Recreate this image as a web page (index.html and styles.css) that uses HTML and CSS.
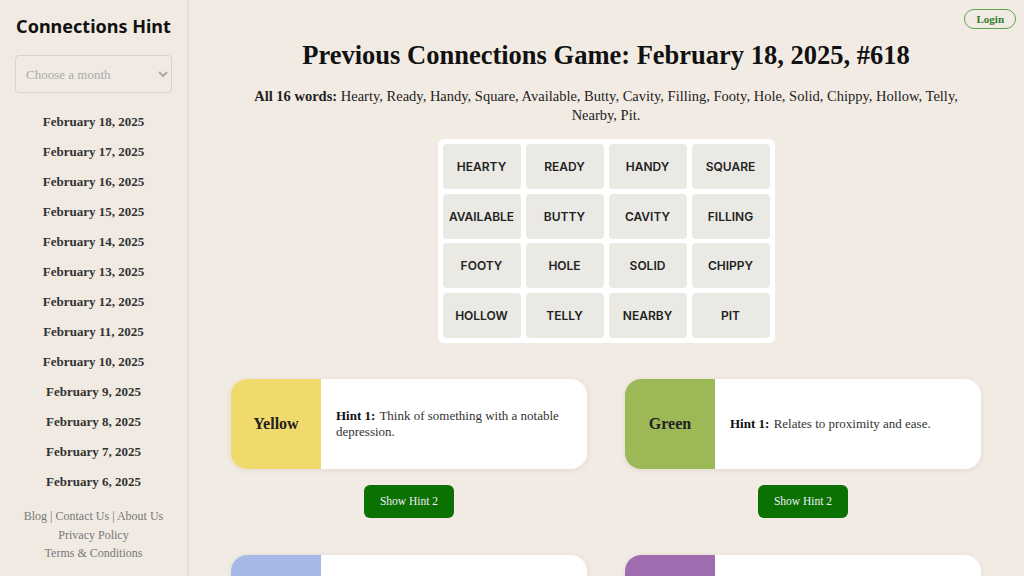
FILE: index.html
```html
<html>
    <head>
        <link rel="stylesheet" href="styles.css">
        <meta name="viewport" content="width=device-width, initial-scale=1.0">
        <title>Connections Hint</title>
    </head>
    <body>
        <div class="page">
            <div class="sidebar">
                <h2 class="brand">Connections Hint</h2>
                <div class="picker">
                    <select class="monthSelect">
                        <option>Choose a month</option>
                    </select>
                </div>
                <ul class="dates">
                    <li><a href="#">February 18, 2025</a></li>
                    <li><a href="#">February 17, 2025</a></li>
                    <li><a href="#">February 16, 2025</a></li>
                    <li><a href="#">February 15, 2025</a></li>
                    <li><a href="#">February 14, 2025</a></li>
                    <li><a href="#">February 13, 2025</a></li>
                    <li><a href="#">February 12, 2025</a></li>
                    <li><a href="#">February 11, 2025</a></li>
                    <li><a href="#">February 10, 2025</a></li>
                    <li><a href="#">February 9, 2025</a></li>
                    <li><a href="#">February 8, 2025</a></li>
                    <li><a href="#">February 7, 2025</a></li>
                    <li><a href="#">February 6, 2025</a></li>
                </ul>
                <div class="sideFooter">
                    <p><a href="#">Blog</a> | <a href="#">Contact Us</a> | <a href="#">About Us</a></p>
                    <p><a href="#">Privacy Policy</a></p>
                    <p><a href="#">Terms &amp; Conditions</a></p>
                </div>
            </div>
            <div class="main">
                <div class="topbar">
                    <a class="loginButton" href="#">Login</a>
                </div>
                <h1 class="headline">Previous Connections Game: February 18, 2025, #618</h1>
                <p class="allWords"><b>All 16 words:</b> Hearty, Ready, Handy, Square, Available, Butty, Cavity, Filling, Footy, Hole, Solid, Chippy, Hollow, Telly, Nearby, Pit.</p>
                <div class="board">
                    <div class="tile">HEARTY</div>
                    <div class="tile">READY</div>
                    <div class="tile">HANDY</div>
                    <div class="tile">SQUARE</div>
                    <div class="tile">AVAILABLE</div>
                    <div class="tile">BUTTY</div>
                    <div class="tile">CAVITY</div>
                    <div class="tile">FILLING</div>
                    <div class="tile">FOOTY</div>
                    <div class="tile">HOLE</div>
                    <div class="tile">SOLID</div>
                    <div class="tile">CHIPPY</div>
                    <div class="tile">HOLLOW</div>
                    <div class="tile">TELLY</div>
                    <div class="tile">NEARBY</div>
                    <div class="tile">PIT</div>
                </div>
                <div class="hints">
                    <div class="hintBlock">
                        <div class="hintCard">
                            <div class="swatch yellow">Yellow</div>
                            <div class="hintText"><p><b>Hint 1:</b> Think of something with a notable depression.</p></div>
                        </div>
                        <a class="showButton" href="#">Show Hint 2</a>
                    </div>
                    <div class="hintBlock">
                        <div class="hintCard">
                            <div class="swatch green">Green</div>
                            <div class="hintText"><p><b>Hint 1:</b> Relates to proximity and ease.</p></div>
                        </div>
                        <a class="showButton" href="#">Show Hint 2</a>
                    </div>
                    <div class="hintBlock">
                        <div class="hintCard">
                            <div class="swatch blue"></div>
                            <div class="hintText"></div>
                        </div>
                    </div>
                    <div class="hintBlock">
                        <div class="hintCard">
                            <div class="swatch purple"></div>
                            <div class="hintText"></div>
                        </div>
                    </div>
                </div>
            </div>
        </div>
    </body>
</html>
```

FILE: styles.css
```css
html, body {margin: 0; padding: 0; height: 100%; overflow: hidden;}
body {font-family: "Liberation Serif", serif; background: #f2ebe4; color: #222;}
a {text-decoration: none; color: inherit;}
p {margin: 0;}

.page {display: flex; height: 100%;}

.sidebar {
    width: 187px;
    flex-shrink: 0;
    background: #f0eae3;
    border-right: 1px solid #e4ddd5;
    box-shadow: 1px 0 3px rgba(0,0,0,0.04);
    display: flex;
    flex-direction: column;
    align-items: center;
}
.brand {
    font-family: "Noto Sans", sans-serif;
    font-size: 18px;
    font-weight: bold;
    margin: 14px 0 0;
    color: #111;
}
.picker {margin-top: 17px; width: 157px;}
.monthSelect {
    width: 157px;
    height: 38px;
    font-family: "Liberation Serif", serif;
    font-size: 13px;
    color: #aaa;
    background: #f0eae3;
    border: 1px solid #d9d3cc;
    border-radius: 4px;
    padding: 0 6px;
}
.dates {list-style: none; margin: 20px 0 0; padding: 0; text-align: center;}
.dates li {height: 30px; line-height: 18px; font-size: 13px; font-weight: bold; color: #333;}
.sideFooter {margin-top: 4px; text-align: center; font-size: 12px; color: #777; line-height: 18.5px;}

.main {flex: 1; display: flex; flex-direction: column; align-items: center;}
.topbar {align-self: stretch; display: flex; justify-content: flex-end; padding: 9px 8px 0 0; height: 20px;}
.loginButton {
    font-size: 11px;
    font-weight: bold;
    color: #2f7d2a;
    border: 1.5px solid #5aa450;
    border-radius: 10px;
    padding: 2px 11px;
    line-height: 14px;
}
.headline {font-size: 26.5px; margin: 11px 0 0; color: #111;}
.allWords {max-width: 720px; text-align: center; font-size: 14.5px; line-height: 19px; margin-top: 16px;}

.board {
    margin-top: 14px;
    background: #fff;
    border-radius: 6px;
    padding: 5px;
    display: grid;
    grid-template-columns: repeat(4, 78px);
    grid-auto-rows: 45px;
    gap: 4.5px 5px;
}
.tile {
    background: #ebe9e3;
    border-radius: 4px;
    display: flex;
    align-items: center;
    justify-content: center;
    font-family: "Inter", "Liberation Sans", sans-serif;
    font-size: 12px;
    font-weight: 600;
    color: #222;
}

.hints {
    margin-top: 36px;
    width: 750px;
    display: grid;
    grid-template-columns: 1fr 1fr;
    gap: 37px 38px;
}
.hintBlock {display: flex; flex-direction: column; align-items: center;}
.hintCard {
    align-self: stretch;
    height: 90px;
    display: flex;
    background: #fff;
    border-radius: 16px;
    overflow: hidden;
    box-shadow: 0 1px 6px rgba(0,0,0,0.08);
}
.swatch {
    width: 90px;
    flex-shrink: 0;
    display: flex;
    align-items: center;
    justify-content: center;
    font-size: 16px;
    font-weight: bold;
    color: #222;
}
.yellow {background: #f0da6b;}
.green {background: #9cb857;}
.blue {background: #a6b9e6;}
.purple {background: #a06cb0;}
.hintText {padding: 0 18px 0 15px; display: flex; align-items: center; font-size: 13px; line-height: 16px; color: #333;}
.hintText b {color: #111; padding-right: 1px;}
.showButton {
    margin-top: 16px;
    width: 90px;
    height: 33px;
    line-height: 33px;
    text-align: center;
    background: #0b7100;
    color: #eef;
    border-radius: 6px;
    font-size: 11.5px;
}
```
